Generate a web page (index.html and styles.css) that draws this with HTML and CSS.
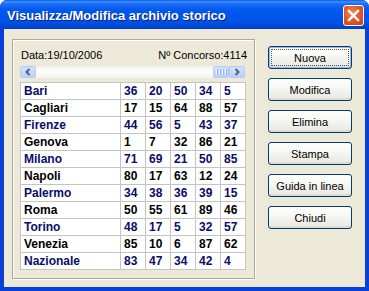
FILE: index.html
```html
<!DOCTYPE html>
<html>
<head>
<meta charset="utf-8">
<link rel="stylesheet" href="styles.css">
</head>
<body>
<div class="window">
  <div class="titlebar">
    <span class="title">Visualizza/Modifica archivio storico</span>
    <span class="close">
      <svg width="13" height="13" viewBox="0 0 13 13"><path d="M2 2 L11 11 M11 2 L2 11" stroke="#fff" stroke-width="2.4" stroke-linecap="square"/></svg>
    </span>
  </div>
  <div class="client">
    <div class="group">
      <div class="header">
        <span>Data:19/10/2006</span>
        <span>Nº Concorso:4114</span>
      </div>
      <div class="scrollbar">
        <span class="sbtn">
          <svg width="8" height="8" viewBox="0 0 8 8"><path d="M5.5 1 L2.5 4 L5.5 7" fill="none" stroke="#4D6185" stroke-width="2"/></svg>
        </span>
        <span class="track"></span>
        <span class="thumb"><i></i><i></i><i></i><i></i></span>
        <span class="sbtn">
          <svg width="8" height="8" viewBox="0 0 8 8"><path d="M2.5 1 L5.5 4 L2.5 7" fill="none" stroke="#4D6185" stroke-width="2"/></svg>
        </span>
      </div>
      <table class="grid">
        <tr class="odd"><td>Bari</td><td>36</td><td>20</td><td>50</td><td>34</td><td>5</td></tr>
        <tr><td>Cagliari</td><td>17</td><td>15</td><td>64</td><td>88</td><td>57</td></tr>
        <tr class="odd"><td>Firenze</td><td>44</td><td>56</td><td>5</td><td>43</td><td>37</td></tr>
        <tr><td>Genova</td><td>1</td><td>7</td><td>32</td><td>86</td><td>21</td></tr>
        <tr class="odd"><td>Milano</td><td>71</td><td>69</td><td>21</td><td>50</td><td>85</td></tr>
        <tr><td>Napoli</td><td>80</td><td>17</td><td>63</td><td>12</td><td>24</td></tr>
        <tr class="odd"><td>Palermo</td><td>34</td><td>38</td><td>36</td><td>39</td><td>15</td></tr>
        <tr><td>Roma</td><td>50</td><td>55</td><td>61</td><td>89</td><td>46</td></tr>
        <tr class="odd"><td>Torino</td><td>48</td><td>17</td><td>5</td><td>32</td><td>57</td></tr>
        <tr><td>Venezia</td><td>85</td><td>10</td><td>6</td><td>87</td><td>62</td></tr>
        <tr class="odd"><td>Nazionale</td><td>83</td><td>47</td><td>34</td><td>42</td><td>4</td></tr>
      </table>
    </div>
    <div class="buttons">
      <button class="btn default"><span>Nuova</span></button>
      <button class="btn"><span>Modifica</span></button>
      <button class="btn"><span>Elimina</span></button>
      <button class="btn"><span>Stampa</span></button>
      <button class="btn"><span>Guida in linea</span></button>
      <button class="btn"><span>Chiudi</span></button>
    </div>
  </div>
</div>
</body>
</html>
```
FILE: styles.css
```css
html, body {
  margin: 0;
  padding: 0;
  background: #ffffff;
}
.window {
  width: 369px;
  height: 291px;
  display: flex;
  flex-direction: column;
  background: #0A3FD8;
  border-radius: 7px 7px 0 0;
  overflow: hidden;
  font-family: "Liberation Sans", Arial, sans-serif;
  font-size: 11px;
  color: #000;
}
.titlebar {
  height: 29px;
  flex: none;
  display: flex;
  align-items: center;
  justify-content: space-between;
  padding: 0 5px 0 7px;
  background: linear-gradient(#0A5AE6 0%, #3B8FFF 6%, #1A6CF5 14%, #0058EE 35%, #0054E6 70%, #0048D8 90%, #003FC8 100%);
}
.title {
  color: #fff;
  font-weight: bold;
  font-size: 13px;
  text-shadow: 1px 1px 0 #0A1E8C;
  margin-top: 1px;
}
.close {
  width: 19px;
  height: 19px;
  border: 1px solid #fff;
  border-radius: 3px;
  background: radial-gradient(circle at 40% 35%, #F08A5E 0%, #E15A2C 45%, #C83D14 100%);
  display: flex;
  align-items: center;
  justify-content: center;
  margin-top: 1px;
}
.client {
  flex: 1;
  margin: 0 4px 4px 4px;
  background: #ECE9D8;
  display: flex;
  align-items: flex-start;
  padding: 10px 13px 0 8px;
  gap: 13px;
}
.group {
  border: 1px solid #ACA899;
  box-shadow: inset 1px 1px 0 #fff, 1px 1px 0 #fff;
  padding: 9px 7px 0 7px;
  box-sizing: content-box;
  width: 227px;
  height: 229px;
}
.header {
  display: flex;
  justify-content: space-between;
  line-height: 13px;
  height: 13px;
  padding: 0 0 0 1px;
}
.scrollbar {
  margin-top: 4px;
  height: 12px;
  width: 225px;
  display: flex;
}
.sbtn {
  width: 14px;
  height: 10px;
  border: 1px solid #B8CBF5;
  border-radius: 2px;
  background: linear-gradient(#D5E1FD, #BCCFFA);
  display: flex;
  align-items: center;
  justify-content: center;
}
.track {
  flex: 1;
  background: linear-gradient(#F2F1EA, #FEFEFB 40%, #F4F3EE);
}
.thumb {
  width: 14px;
  height: 10px;
  border: 1px solid #B8CBF5;
  border-radius: 2px;
  background: linear-gradient(#D5E1FD, #BCCFFA);
  display: flex;
  align-items: center;
  justify-content: center;
  gap: 1px;
}
.thumb i {
  width: 1px;
  height: 6px;
  background: #EEF4FE;
  border-right: 1px solid #8CB0F8;
}
.grid {
  margin-top: 4px;
  border-collapse: collapse;
  background: #fff;
  border: 1px solid #C8C8C8;
}
.grid td {
  border: 1px solid #C4C4C4;
  height: 16px;
  padding: 0 0 0 3px;
  width: 25px;
  font-family: "Liberation Sans", Arial, sans-serif;
  font-weight: bold;
  font-size: 12px;
  line-height: 16px;
  color: #000;
  white-space: nowrap;
  box-sizing: border-box;
}
.grid td:first-child {
  width: 100px;
}
.grid tr.odd td {
  color: #0A0C6A;
}
.buttons {
  display: flex;
  flex-direction: column;
  gap: 9px;
  padding-top: 7px;
}
.btn {
  width: 84px;
  height: 23px;
  border: 1px solid #003C74;
  border-radius: 3px;
  background: linear-gradient(#FFFFFF 0%, #F7F7F3 40%, #ECEBE5 85%, #D8D3C6 100%);
  font-family: "Liberation Sans", Arial, sans-serif;
  font-size: 11px;
  color: #000;
  padding: 0;
  display: flex;
  align-items: center;
  justify-content: center;
}
.btn.default {
  box-shadow: inset 0 0 0 1px #9DB9EB;
}
.btn.default span {
  display: flex;
  align-items: center;
  justify-content: center;
  width: 76px;
  height: 15px;
  outline: 1px dotted #555;
}
```
